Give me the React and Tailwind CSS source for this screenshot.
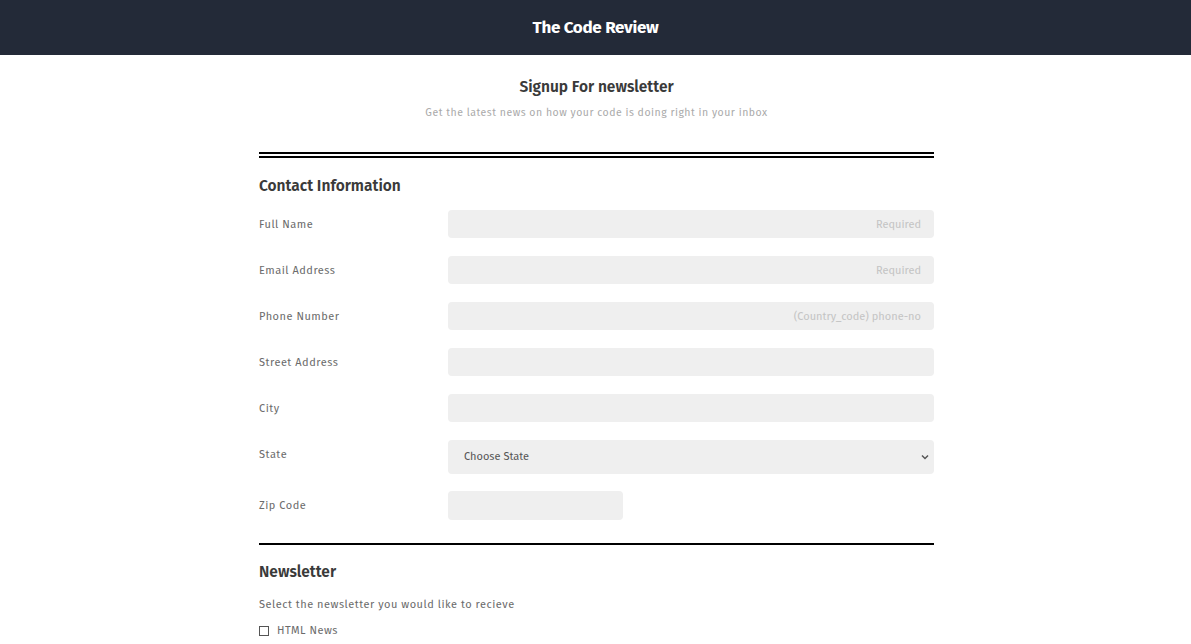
import React from 'react'

const font = { fontFamily: '"Fira Sans", "Open Sans", Lato, sans-serif' }

function Field({ label, placeholder, short }) {
  return (
    <div className="flex items-center h-[28px] mb-[18px]">
      <label className="w-[189px] pt-[2px] text-[11px] tracking-[0.5px] text-[#6b6b6b]">{label}</label>
      <input
        type="text"
        placeholder={placeholder}
        className={`${short ? 'w-[175px] h-[29px]' : 'flex-1 h-[28px]'} bg-[#efefef] rounded-[4px] pl-[14px] pr-[13px] text-[11px] text-right placeholder:text-[#c4c4c4] outline-none`}
      />
    </div>
  )
}

export default function App() {
  return (
    <div className="min-h-screen bg-white" style={font}>
      <header className="h-[55px] bg-[#232a38] flex items-center justify-center">
        <h1 className="text-white text-[17px] font-bold tracking-[-0.3px]">The Code Review</h1>
      </header>

      <div className="max-w-[677px] mx-auto pl-[2px]">
        <div className="text-center pt-[21px]">
          <h2 className="text-[15.5px] font-semibold text-[#3a3a3a]">Signup For newsletter</h2>
          <p className="mt-[6px] text-[10.5px] tracking-[0.5px] text-[#aaaaaa]">
            Get the latest news on how your code is doing right in your inbox
          </p>
        </div>

        <div className="mt-[31px] border-t-[6px] border-double border-black" />

        <h3 className="mt-[17px] text-[15.5px] font-semibold text-[#3a3a3a]">Contact Information</h3>

        <div className="mt-[12px]">
          <Field label="Full Name" placeholder="Required" />
          <Field label="Email Address" placeholder="Required" />
          <Field label="Phone Number" placeholder="(Country_code) phone-no" />
          <Field label="Street Address" />
          <Field label="City" />
          <div className="flex items-start mb-[17px]">
            <label className="w-[189px] text-[11px] tracking-[0.5px] text-[#6b6b6b] pt-[7px]">State</label>
            <div className="relative flex-1">
              <select className="appearance-none w-full h-[34px] bg-[#efefef] rounded-[4px] pl-[16px] text-[11px] text-[#555] outline-none">
                <option>Choose State</option>
              </select>
              <svg className="absolute right-[4px] top-[13px]" width="10" height="8" viewBox="0 0 10 8">
                <path d="M2 2.5 L5 5.5 L8 2.5" fill="none" stroke="#555" strokeWidth="1.5" />
              </svg>
            </div>
          </div>
          <Field label="Zip Code" short />
        </div>

        <div className="mt-[24px] border-t-2 border-black" />

        <h3 className="mt-[16px] text-[15.5px] font-semibold text-[#3a3a3a]">Newsletter</h3>
        <p className="mt-[12px] text-[11px] tracking-[0.5px] text-[#6b6b6b]">
          Select the newsletter you would like to recieve
        </p>
        <label className="mt-[10px] flex items-center gap-[8px] text-[11px] tracking-[0.5px] text-[#6b6b6b]">
          <span className="w-[10px] h-[10px] border border-[#555] bg-white" />
          HTML News
        </label>
      </div>
    </div>
  )
}
